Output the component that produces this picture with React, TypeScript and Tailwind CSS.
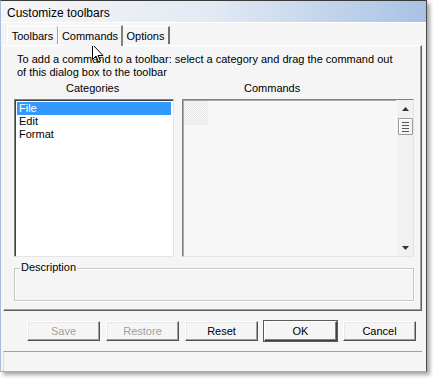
import React from "react";

const font = { fontFamily: '"Liberation Sans", Arial, sans-serif' };

function Btn({ label, disabled, primary }: { label: string; disabled?: boolean; primary?: boolean }) {
  return (
    <div
      className={
        "w-[73px] h-[20px] flex items-center justify-center text-[11px] bg-[#f5f5f5] border-t border-l border-t-white border-l-white border-r border-b " +
        (primary
          ? "border-r-[#404040] border-b-[#404040] outline outline-1 outline-[#5a5a5a] shadow-[inset_-1px_-1px_#808080]"
          : "border-r-[#505050] border-b-[#505050] shadow-[inset_-1px_-1px_#a0a0a0,inset_1px_1px_#e8e8e8]") +
        (disabled ? " text-[#a0a0a0]" : " text-black")
      }
    >
      {label}
    </div>
  );
}

function Cursor() {
  return (
    <svg className="absolute left-[92px] top-[44px]" width="12" height="19" viewBox="0 0 12 19">
      <path d="M0.5 0.5 L0.5 15.5 L4 12 L6.5 18 L8.5 17 L6 11.5 L11 11.5 Z" fill="white" stroke="black" strokeWidth="1" />
    </svg>
  );
}

export default function App() {
  return (
    <div className="w-[433px] h-[379px] bg-white relative" style={font}>
      <div className="w-[427px] h-[372px] flex flex-col bg-[#f5f5f5] border-t border-t-[#3a3a3a] border-l border-l-[#a4bedd] border-r border-r-[#4a4a4a] border-b border-b-[#93aed0] shadow-[3px_3px_4px_rgba(0,0,0,0.35)]">
        {/* title bar */}
        <div className="h-[23px] flex items-center pl-[6px] pt-[3px] bg-linear-to-r from-[#f6f6f6] via-[#e2eaf4] to-[#a8c2e4] border-b border-b-white">
          <span className="text-[12px] text-black">Customize toolbars</span>
        </div>

        <div className="flex flex-col pl-[2px] pr-[4px]">
          {/* tabs */}
          <div className="h-[22px] flex items-end pl-[4px] relative z-10">
            <div className="w-[51px] h-[18px] flex items-center justify-center pt-[2px] text-[11px] border-t border-l border-t-white border-l-white border-r border-r-[#a0a0a0] mb-[1px]">
              Toolbars
            </div>
            <div className="w-[65px] h-[21px] flex items-start pt-[2px] justify-center text-[11px] bg-[#f5f5f5] border-t border-l border-t-white border-l-white border-r-2 border-r-[#808080] -mb-[1px]">
              Commands
            </div>
            <div className="w-[47px] h-[18px] flex items-center justify-center pt-[2px] text-[11px] border-t border-t-white border-r-2 border-r-[#707070] mb-[1px]">
              Options
            </div>
          </div>

          {/* panel */}
          <div className="h-[266px] border-t border-l border-t-white border-l-white border-r border-b border-r-[#606060] border-b-[#606060] shadow-[inset_-1px_-1px_#a0a0a0] pl-[10px] pt-[7px] flex flex-col">
            <div className="ml-[3px] text-[11px] leading-[13px] text-black">
              <div>To add a command to a toolbar: select a category and drag the command out</div>
              <div>of this dialog box to the toolbar</div>
            </div>
            <div className="flex mt-[3px] text-[11px] leading-[13px]">
              <div className="w-[168px] pl-[52px]">Categories</div>
              <div className="pl-[62px]">Commands</div>
            </div>
            <div className="flex mt-[4px] gap-[8px]">
              <div className="w-[160px] h-[158px] bg-white border-t border-l border-t-[#808080] border-l-[#808080] border-r border-b border-r-[#e4e4e4] border-b-[#e4e4e4] shadow-[inset_1px_1px_#404040] p-[2px] text-[11px] leading-[13px]">
                <div className="bg-[#3399ff] text-white pl-[2px]">File</div>
                <div className="pl-[2px]">Edit</div>
                <div className="pl-[2px]">Format</div>
              </div>
              <div className="w-[232px] h-[158px] flex bg-[#f7f7f7] border-t border-l border-t-[#808080] border-l-[#808080] border-r border-b border-r-[#e4e4e4] border-b-[#e4e4e4] shadow-[inset_1px_1px_#a8a8a8]">
                <div className="flex-1 pt-[1px] pl-[1px]">
                  <div className="w-[24px] h-[24px] bg-[repeating-conic-gradient(#e8e8e8_0_25%,#f7f7f7_0_50%)] bg-[length:2px_2px]" />
                </div>
                <div className="w-[17px] flex flex-col items-center bg-[#f1f1f1] border-l border-l-[#fafafa]">
                  <div className="h-[18px] flex items-center justify-center">
                    <svg width="7" height="4" viewBox="0 0 7 4"><path d="M3.5 0 L7 4 L0 4 Z" fill="#333" /></svg>
                  </div>
                  <div className="w-[15px] h-[17px] bg-[#f4f4f4] border border-[#9a9a9a] rounded-[1px] flex flex-col items-center justify-center gap-[2px] shadow-[inset_1px_1px_white]">
                    <div className="w-[7px] h-px bg-[#555]" />
                    <div className="w-[7px] h-px bg-[#555]" />
                    <div className="w-[7px] h-px bg-[#555]" />
                    <div className="w-[7px] h-px bg-[#555]" />
                  </div>
                  <div className="flex-1" />
                  <div className="h-[16px] flex items-center justify-center">
                    <svg width="7" height="4" viewBox="0 0 7 4"><path d="M0 0 L7 0 L3.5 4 Z" fill="#333" /></svg>
                  </div>
                </div>
              </div>
            </div>
            {/* description group */}
            <div className="relative mt-[11px] w-[400px] h-[33px] border border-[#c8c8c8] shadow-[1px_1px_white,inset_1px_1px_white]">
              <span className="absolute -top-[8px] left-[5px] bg-[#f5f5f5] px-[1px] text-[11px] leading-[13px]">Description</span>
            </div>
          </div>

          {/* buttons */}
          <div className="flex gap-[6px] pl-[24px] mt-[10px]">
            <Btn label="Save" disabled />
            <Btn label="Restore" disabled />
            <Btn label="Reset" />
            <Btn label="OK" primary />
            <Btn label="Cancel" />
          </div>

          {/* status bar */}
          <div className="mt-[10px] h-[20px] border-t border-t-[#a0a0a0] border-l border-l-[#dcdcdc]" />
        </div>
      </div>
      <Cursor />
    </div>
  );
}
